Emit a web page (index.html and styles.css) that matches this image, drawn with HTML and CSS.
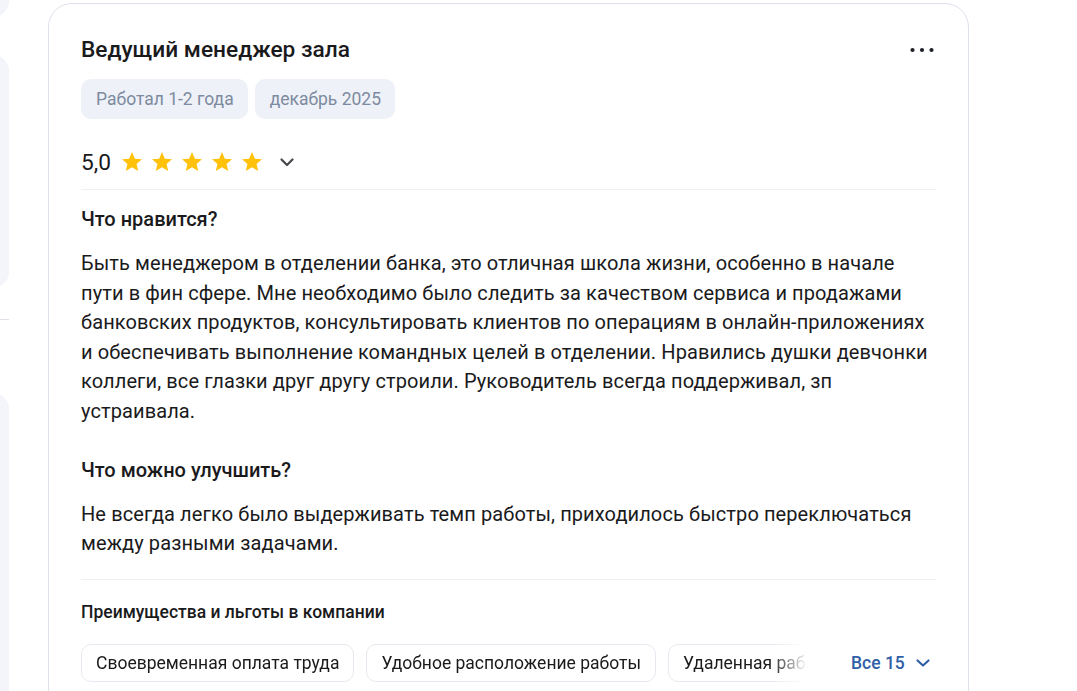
FILE: index.html
```html
<!DOCTYPE html>
<html lang="ru">
<head>
  <meta charset="UTF-8">
  <meta name="viewport" content="width=device-width, initial-scale=1">
  <title>Отзыв — Ведущий менеджер зала</title>
  <link rel="stylesheet" href="styles.css">
</head>
<body>
  <div class="page">
    <aside class="side">
      <div class="ghost ghost-top"></div>
      <div class="ghost ghost-mid"></div>
      <div class="ghost-line"></div>
      <div class="ghost ghost-low"></div>
    </aside>

    <article class="review">
      <div class="review-head">
        <h2 class="review-title">Ведущий менеджер зала</h2>
        <button class="more" aria-label="Ещё">
          <svg width="24" height="24" viewBox="0 0 24 24"><circle cx="2.5" cy="12" r="2.1"/><circle cx="12" cy="12" r="2.1"/><circle cx="21.5" cy="12" r="2.1"/></svg>
        </button>
      </div>

      <div class="tags">
        <span class="tag">Работал 1-2 года</span>
        <span class="tag">декабрь 2025</span>
      </div>

      <div class="rating">
        <span class="rating-value">5,0</span>
        <span class="stars">
          <svg class="star" viewBox="0 0 24 24"><path d="M12 17.27L18.18 21l-1.64-7.03L22 9.24l-7.19-.61L12 2 9.19 8.63 2 9.24l5.46 4.73L5.82 21z"/></svg>
          <svg class="star" viewBox="0 0 24 24"><path d="M12 17.27L18.18 21l-1.64-7.03L22 9.24l-7.19-.61L12 2 9.19 8.63 2 9.24l5.46 4.73L5.82 21z"/></svg>
          <svg class="star" viewBox="0 0 24 24"><path d="M12 17.27L18.18 21l-1.64-7.03L22 9.24l-7.19-.61L12 2 9.19 8.63 2 9.24l5.46 4.73L5.82 21z"/></svg>
          <svg class="star" viewBox="0 0 24 24"><path d="M12 17.27L18.18 21l-1.64-7.03L22 9.24l-7.19-.61L12 2 9.19 8.63 2 9.24l5.46 4.73L5.82 21z"/></svg>
          <svg class="star" viewBox="0 0 24 24"><path d="M12 17.27L18.18 21l-1.64-7.03L22 9.24l-7.19-.61L12 2 9.19 8.63 2 9.24l5.46 4.73L5.82 21z"/></svg>
        </span>
        <svg class="chevron" width="24" height="24" viewBox="0 0 24 24"><path d="M6.5 9.5l5.5 5.5 5.5-5.5"/></svg>
      </div>

      <hr class="divider">

      <h3 class="section-title">Что нравится?</h3>
      <p class="section-text">Быть менеджером в отделении банка, это отличная школа жизни, особенно в начале пути в фин сфере. Мне необходимо было следить за качеством сервиса и продажами банковских продуктов, консультировать клиентов по операциям в онлайн-приложениях и обеспечивать выполнение командных целей в отделении. Нравились душки девчонки коллеги, все глазки друг другу строили. Руководитель всегда поддерживал, зп устраивала.</p>

      <h3 class="section-title gap-top">Что можно улучшить?</h3>
      <p class="section-text">Не всегда легко было выдерживать темп работы, приходилось быстро переключаться между разными задачами.</p>

      <hr class="divider divider-low">

      <h4 class="perks-title">Преимущества и льготы в компании</h4>
      <div class="perks">
        <div class="perk-list">
          <span class="perk">Своевременная оплата труда</span>
          <span class="perk">Удобное расположение работы</span>
          <span class="perk">Удаленная работа</span>
        </div>
        <button class="show-all">Все 15
          <svg width="16" height="16" viewBox="0 0 16 16"><path d="M2.5 5.5l5.5 5 5.5-5"/></svg>
        </button>
      </div>
    </article>
  </div>
</body>
</html>
```

FILE: styles.css
```css
body { margin: 0; background: #fff; font-family: Roboto, "Noto Sans", sans-serif; color: #1a1a1c; }
.page { display: flex; gap: 39px; height: 691px; overflow: hidden; }

/* neighbour cards, cut by the left edge */
.side { width: 9px; flex: none; overflow: hidden; }
.ghost { width: 40px; margin-left: -31px; background: #f4f5fa; border-radius: 16px; }
.ghost-top { height: 40px; margin-top: -23px; }
.ghost-mid { height: 233px; margin-top: 38px; }
.ghost-line { height: 1px; margin-top: 31px; background: #dfe1e8; }
.ghost-low { height: 400px; margin-top: 73px; }

.review { flex: none; box-sizing: border-box; width: 921px; height: 760px; margin-top: 3px; padding: 32px; border: 1px solid #dde2ea; border-radius: 24px; }
.review-head { display: flex; justify-content: space-between; align-items: center; }
.review-title { margin: 0; font-size: 22.7px; line-height: 28px; font-weight: 500; }
.more { display: flex; padding: 0; margin-right: 2px; border: none; background: none; cursor: pointer; }
.more svg { fill: #1f2329; }

.tags { display: flex; gap: 7px; margin-top: 15px; }
.tag { height: 40px; display: flex; align-items: center; padding: 0 14px 0 15px; background: #eef1f7; border-radius: 10px; color: #7d8aa0; font-size: 17.5px; }

.rating { display: flex; align-items: center; height: 28px; margin-top: 29px; }
.rating-value { font-size: 22.7px; font-weight: 400; margin-right: 9px; }
.stars { display: flex; gap: 6px; }
.star { width: 24px; height: 24px; fill: #ffc10a; }
.chevron { margin-left: 11px; fill: none; stroke: #45474c; stroke-width: 2.2; stroke-linecap: round; stroke-linejoin: round; }

.divider { margin: 13px 0 0; border: none; height: 1px; background: #eef0f4; }
.divider-low { margin-top: 20px; }

.section-title { margin: 17px 0 0; font-size: 20px; line-height: 24px; font-weight: 500; }
.section-title.gap-top { margin-top: 31px; }
.section-text { margin: 18px 0 0; font-size: 20px; line-height: 29.6px; letter-spacing: 0.1px; }

.perks-title { margin: 22px 0 0; font-size: 17.5px; line-height: 20px; font-weight: 500; }
.perks { display: flex; align-items: center; margin-top: 22px; }
.perk-list { display: flex; gap: 12px; width: 726px; overflow: hidden; -webkit-mask-image: linear-gradient(to right, #000 690px, transparent 726px); mask-image: linear-gradient(to right, #000 690px, transparent 726px); }
.perk { flex: none; height: 38px; box-sizing: border-box; display: flex; align-items: center; padding: 0 14px; border: 1px solid #e6e9ef; border-radius: 10px; font-size: 17.5px; white-space: nowrap; }
.show-all { display: flex; align-items: center; gap: 10px; margin-left: 44px; padding: 0; border: none; background: none; color: #2f5fa6; font-family: inherit; font-size: 17.5px; font-weight: 500; cursor: pointer; }
.show-all svg { fill: none; stroke: #2f5fa6; stroke-width: 2.2; stroke-linecap: round; stroke-linejoin: round; }
```
